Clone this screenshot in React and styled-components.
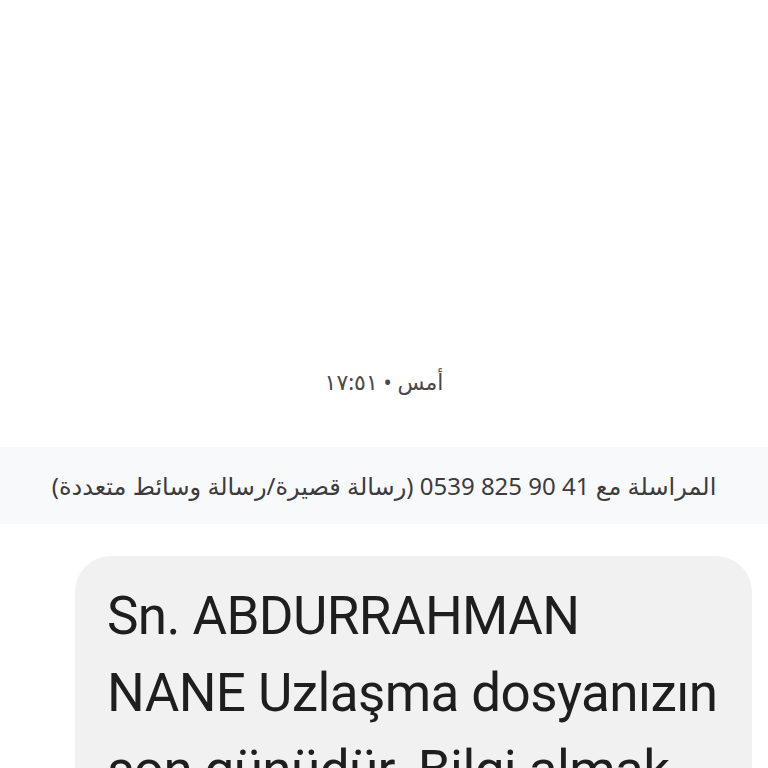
import React from "react";
import styled, { createGlobalStyle } from "styled-components";

const Global = createGlobalStyle`
  html, body { margin: 0; padding: 0; background: #ffffff; }
  body { width: 768px; height: 768px; overflow: hidden; font-family: Roboto, "Noto Sans", "DejaVu Sans", sans-serif; }
`;

const Screen = styled.div`
  width: 768px;
  height: 768px;
  overflow: hidden;
  display: flex;
  flex-direction: column;
  background: #ffffff;
  & > * { flex-shrink: 0; }
`;

const Timestamp = styled.div`
  margin-top: 366px;
  height: 30px;
  line-height: 30px;
  text-align: center;
  font-size: 22px;
  color: #4a4a4a;
  font-family: "Noto Sans", "DejaVu Sans", sans-serif;
`;

const InfoBand = styled.div`
  margin-top: 51px;
  height: 77px;
  background: #f8f9fb;
  display: flex;
  align-items: center;
  justify-content: center;
  font-size: 24px;
  color: #3c3c3c;
  font-family: "Noto Sans", "DejaVu Sans", sans-serif;
`;

const Bubble = styled.div`
  margin: 32px 16px 0 75px;
  background: #f1f1f1;
  border-radius: 36px;
  padding: 22px 30px 40px 32px;
  font-family: Roboto, "Noto Sans", sans-serif;
  font-size: 53px;
  letter-spacing: -0.6px;
  line-height: 77px;
  color: #1e1e1e;
`;

export default function App() {
  return (
    <>
      <Global />
      <Screen>
        <Timestamp dir="rtl">أمس • ١٧:٥١</Timestamp>
        <InfoBand dir="rtl">المراسلة مع 41 90 825 0539 (رسالة قصيرة/رسالة وسائط متعددة)</InfoBand>
        <Bubble>
          Sn. ABDURRAHMAN NANE Uzlaşma dosyanızın son günüdür. Bilgi almak için lütfen arayınız.
        </Bubble>
      </Screen>
    </>
  );
}
